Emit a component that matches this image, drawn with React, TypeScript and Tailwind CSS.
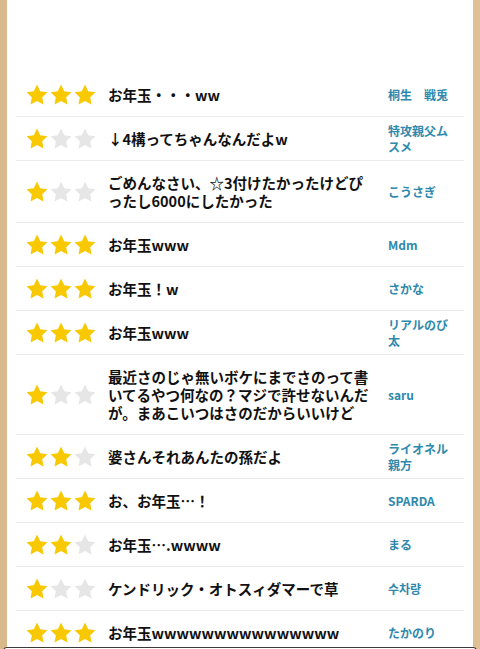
import React from "react";

type Review = {
  stars: number;
  text: string;
  name: string;
};

const reviews: Review[] = [
  { stars: 3, text: "お年玉・・・ww", name: "桐生　戦兎" },
  { stars: 1, text: "↓4構ってちゃんなんだよw", name: "特攻親父ムスメ" },
  { stars: 1, text: "ごめんなさい、☆3付けたかったけどぴったし6000にしたかった", name: "こうさぎ" },
  { stars: 3, text: "お年玉www", name: "Mdm" },
  { stars: 3, text: "お年玉！w", name: "さかな" },
  { stars: 3, text: "お年玉www", name: "リアルのび太" },
  {
    stars: 1,
    text: "最近さのじゃ無いボケにまでさのって書いてるやつ何なの？マジで許せないんだが。まあこいつはさのだからいいけど",
    name: "saru",
  },
  { stars: 2, text: "婆さんそれあんたの孫だよ", name: "ライオネル親方" },
  { stars: 3, text: "お、お年玉…！", name: "SPARDA" },
  { stars: 2, text: "お年玉….wwww", name: "まる" },
  { stars: 1, text: "ケンドリック・オトスィダマーで草", name: "수차량" },
  { stars: 3, text: "お年玉wwwwwwwwwwwwwww", name: "たかのり" },
];

// simple 5 point star
function Star({ on }: { on: boolean }) {
  return (
    <svg viewBox="0 0 24 24" className="w-[24px] h-[24px]">
      <path
        d="M12 1.6l3.2 6.6 7.2 1-5.2 5.1 1.25 7.2L12 18.1l-6.45 3.4 1.25-7.2L1.6 9.2l7.2-1z"
        fill={on ? "#f8c800" : "#e6e6e6"}
      />
    </svg>
  );
}

function Stars({ count }: { count: number }) {
  return (
    <div className="flex items-center w-[74px] h-[24px] shrink-0">
      {[0, 1, 2].map((i) => (
        <Star key={i} on={i < count} />
      ))}
    </div>
  );
}

function Row({ review }: { review: Review }) {
  return (
    <div className="flex items-center border-b border-[#ececec] pl-[9px] pr-[10px] min-h-[43px]">
      <Stars count={review.stars} />
      <div className="flex-1 ml-[9px] py-[12.5px] text-[14.5px] leading-[18px] font-bold text-[#111]">
        {review.text}
      </div>
      <div className="w-[66px] shrink-0 ml-[14px] text-[12px] leading-[16px] font-bold text-[#2f89ad]">
        {review.name}
      </div>
    </div>
  );
}

export default function App() {
  return (
    <div className="w-[480px] h-[649px] overflow-hidden flex flex-col bg-[linear-gradient(90deg,#d9b98b,#e4c89f_30%,#d4b283_60%,#dfc195)] font-['Noto_Sans_CJK_JP','Noto_Sans_CJK_KR',sans-serif]">
      <div className="h-[647px] shrink-0 mx-[7px] bg-white overflow-hidden">
        <div className="h-[73px]" />
        <div className="mx-[9px]">
          {reviews.map((r, i) => (
            <Row key={i} review={r} />
          ))}
        </div>
      </div>
      {/* bottom sheet edge */}
      <div className="mx-[3px] h-[10px] shrink-0 bg-white border-t border-x border-[#3a3a3a] rounded-t-[4px]" />
    </div>
  );
}
